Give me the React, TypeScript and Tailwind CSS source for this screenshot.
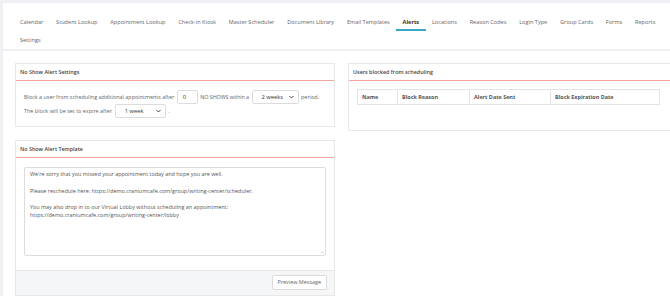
import React from "react";

const tabs = [
  "Calendar",
  "Student Lookup",
  "Appointment Lookup",
  "Check-in Kiosk",
  "Master Scheduler",
  "Document Library",
  "Email Templates",
  "Alerts",
  "Locations",
  "Reason Codes",
  "Login Type",
  "Group Cards",
  "Forms",
  "Reports",
  "Settings",
];

const Chevron = (): React.ReactElement => (
  <svg width="5" height="4" viewBox="0 0 10 7" className="shrink-0">
    <path d="M1 1.5l4 4 4-4" fill="none" stroke="#444" strokeWidth="2" />
  </svg>
);

const FakeSelect = ({ value, width }: { value: string; width: string }): React.ReactElement => (
  <span
    className={`inline-flex h-[14px] items-center justify-between rounded-[2px] border border-[#dcdcdc] bg-white pl-[9px] pr-[4px] text-[5.8px] text-[#333] ${width}`}
  >
    {value}
    <Chevron />
  </span>
);

const PanelHeader = ({ title }: { title: string }): React.ReactElement => (
  <div className="flex h-[17px] items-center border-b-[1.5px] border-[#f2a59c] px-[4px] text-[5.4px] font-semibold text-[#444]">
    {title}
  </div>
);

const App = (): React.ReactElement => {
  return (
    <div
      className="h-[296px] w-[670px] overflow-hidden bg-[#eef0f4] pl-[3px] pt-[3px]"
      style={{ fontFamily: '"Open Sans", "Liberation Sans", sans-serif' }}
    >
      <div className="h-full bg-white">
        <nav className="flex flex-wrap border-b-2 border-[#eef0f4] pl-[10.5px] pt-[10px]">
          {tabs.map((tab) => (
            <div
              key={tab}
              className={
                tab === "Alerts"
                  ? "flex h-[18px] items-center whitespace-nowrap border-b-2 border-[#3aa8c8] px-[6.4px] pt-[2px] text-[5.6px] font-bold text-[#333]"
                  : "flex h-[18px] items-center whitespace-nowrap border-b-2 border-transparent px-[6.4px] pt-[2px] text-[5.6px] text-[#666]"
              }
            >
              {tab}
            </div>
          ))}
        </nav>

        <div className="flex gap-[13px] pl-[12px] pt-[12px]">
          <div className="flex w-[320px] shrink-0 flex-col gap-[13px]">
            <section className="border border-[#e8e8e8] bg-white">
              <PanelHeader title="No Show Alert Settings" />
              <div className="flex flex-col whitespace-nowrap px-[8px] pb-[8px] pt-[9px] text-[5.45px] text-[#666]">
                <div className="flex items-center">
                  <span>Block a user from scheduling additional appointments after</span>
                  <span className="mx-[2.5px] inline-flex h-[14px] w-[21px] items-center rounded-[2px] border border-[#dcdcdc] pl-[5px] text-[5.8px] text-[#333]">
                    0
                  </span>
                  <span className="tracking-[-0.1px]">NO SHOWS within a</span>
                  <span className="mx-[2.5px]">
                    <FakeSelect value="2 weeks" width="w-[47px]" />
                  </span>
                  <span>period.</span>
                </div>
                <div className="flex items-center">
                  <span>The block will be set to expire after</span>
                  <span className="mx-[2.5px]">
                    <FakeSelect value="1 week" width="w-[51px]" />
                  </span>
                  <span>.</span>
                </div>
              </div>
            </section>

            <section className="border border-[#e8e8e8] bg-white">
              <PanelHeader title="No Show Alert Template" />
              <div className="px-[8px] pb-[14px] pt-[9px]">
                <div className="relative h-[89px] rounded-[2px] border border-[#dcdcdc] px-[5px] pt-[2px] text-[5.45px] leading-[8.3px] text-[#555]">
                  <p>We're sorry that you missed your appointment today and hope you are well.</p>
                  <p className="mt-[8.3px]">
                    Please reschedule here: https://demo.craniumcafe.com/group/writing-center/scheduler.
                  </p>
                  <p className="mt-[8.3px]">
                    You may also drop in to our Virtual Lobby without scheduling an appointment:
                  </p>
                  <p>https://demo.craniumcafe.com/group/writing-center/lobby</p>
                  <svg width="4" height="4" viewBox="0 0 8 8" className="absolute bottom-[1px] right-[1px]">
                    <path d="M7 2L2 7M7 5L5 7" stroke="#aaa" strokeWidth="1" />
                  </svg>
                </div>
              </div>
              <div className="flex justify-end border-t border-[#e8e8e8] bg-[#f5f6f8] px-[7px] pb-[5px] pt-[4px]">
                <button className="h-[15px] rounded-[2px] border border-[#dcdcdc] bg-white px-[5px] text-[5.45px] text-[#666]">
                  Preview Message
                </button>
              </div>
            </section>
          </div>

          <div className="w-[340px] shrink-0">
            <section className="border border-[#e8e8e8] bg-white">
              <PanelHeader title="Users blocked from scheduling" />
              <div className="pb-[25px] pl-[8px] pt-[8px]">
                <div className="grid h-[16px] w-[303px] grid-cols-[39px_72px_81px_1fr] border border-[#e3e3e3] text-[5.45px] font-bold text-[#555]">
                  <div className="flex items-center pl-[4px]">Name</div>
                  <div className="flex items-center border-l border-[#e3e3e3] pl-[4px]">Block Reason</div>
                  <div className="flex items-center border-l border-[#e3e3e3] pl-[4px]">Alert Date Sent</div>
                  <div className="flex items-center border-l border-[#e3e3e3] pl-[4px]">Block Expiration Date</div>
                </div>
              </div>
            </section>
          </div>
        </div>
      </div>
    </div>
  );
};

export default App;
